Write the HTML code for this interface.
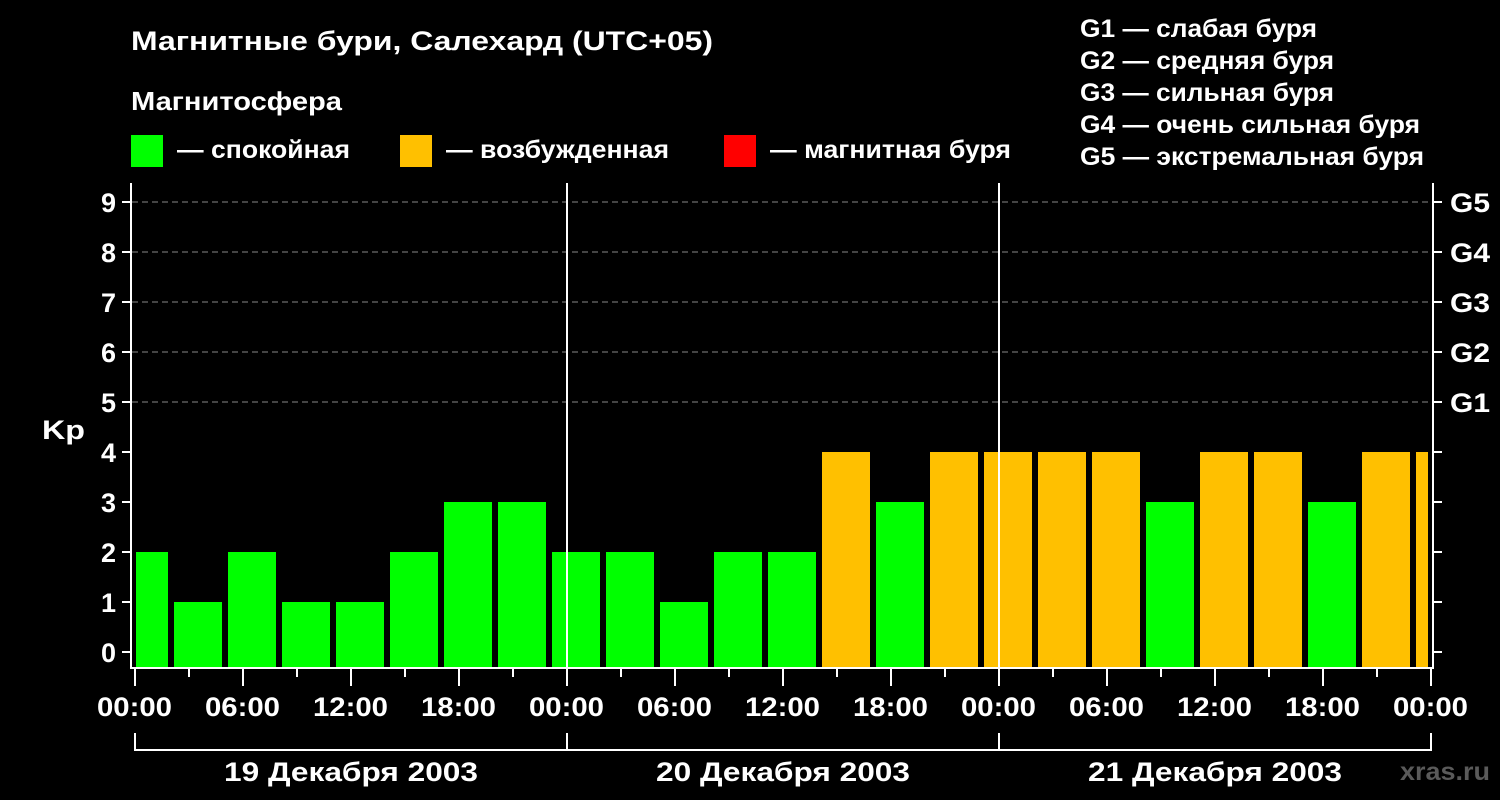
<!DOCTYPE html>
<html><head><meta charset="utf-8"><style>
html,body{margin:0;padding:0;background:#000;}
svg{display:block;font-family:"Liberation Sans",Arial,sans-serif;font-weight:bold;}
</style></head><body>
<svg width="1500" height="800" viewBox="0 0 1500 800" xmlns="http://www.w3.org/2000/svg">
<rect width="1500" height="800" fill="#000"/>
<text x="131" y="50" font-size="27" fill="#fff" textLength="582" lengthAdjust="spacingAndGlyphs">Магнитные бури, Салехард (UTC+05)</text>
<text x="131" y="110" font-size="26" fill="#fff" textLength="211" lengthAdjust="spacingAndGlyphs">Магнитосфера</text>
<rect x="131" y="135" width="32" height="32" fill="#00ff00"/>
<text x="177" y="158" font-size="25" fill="#fff" textLength="173" lengthAdjust="spacingAndGlyphs">— спокойная</text>
<rect x="400" y="135" width="32" height="32" fill="#ffc000"/>
<text x="446" y="158" font-size="25" fill="#fff" textLength="223" lengthAdjust="spacingAndGlyphs">— возбужденная</text>
<rect x="724" y="135" width="32" height="32" fill="#ff0000"/>
<text x="770" y="158" font-size="25" fill="#fff" textLength="241" lengthAdjust="spacingAndGlyphs">— магнитная буря</text>
<g font-size="25" fill="#fff" lengthAdjust="spacingAndGlyphs">
<text x="1080" y="37" textLength="237" lengthAdjust="spacingAndGlyphs">G1 — слабая буря</text>
<text x="1080" y="69" textLength="254" lengthAdjust="spacingAndGlyphs">G2 — средняя буря</text>
<text x="1080" y="101" textLength="254" lengthAdjust="spacingAndGlyphs">G3 — сильная буря</text>
<text x="1080" y="133" textLength="340" lengthAdjust="spacingAndGlyphs">G4 — очень сильная буря</text>
<text x="1080" y="165" textLength="344" lengthAdjust="spacingAndGlyphs">G5 — экстремальная буря</text>
</g>
<g stroke="#888" stroke-width="1" stroke-dasharray="6,4">
<line x1="132" x2="1432" y1="202" y2="202"/>
<line x1="132" x2="1432" y1="252" y2="252"/>
<line x1="132" x2="1432" y1="302" y2="302"/>
<line x1="132" x2="1432" y1="352" y2="352"/>
<line x1="132" x2="1432" y1="402" y2="402"/>
</g>
<g>
<rect x="136" y="552" width="32" height="115" fill="#00ff00"/>
<rect x="174" y="602" width="48" height="65" fill="#00ff00"/>
<rect x="228" y="552" width="48" height="115" fill="#00ff00"/>
<rect x="282" y="602" width="48" height="65" fill="#00ff00"/>
<rect x="336" y="602" width="48" height="65" fill="#00ff00"/>
<rect x="390" y="552" width="48" height="115" fill="#00ff00"/>
<rect x="444" y="502" width="48" height="165" fill="#00ff00"/>
<rect x="498" y="502" width="48" height="165" fill="#00ff00"/>
<rect x="552" y="552" width="48" height="115" fill="#00ff00"/>
<rect x="606" y="552" width="48" height="115" fill="#00ff00"/>
<rect x="660" y="602" width="48" height="65" fill="#00ff00"/>
<rect x="714" y="552" width="48" height="115" fill="#00ff00"/>
<rect x="768" y="552" width="48" height="115" fill="#00ff00"/>
<rect x="822" y="452" width="48" height="215" fill="#ffc000"/>
<rect x="876" y="502" width="48" height="165" fill="#00ff00"/>
<rect x="930" y="452" width="48" height="215" fill="#ffc000"/>
<rect x="984" y="452" width="48" height="215" fill="#ffc000"/>
<rect x="1038" y="452" width="48" height="215" fill="#ffc000"/>
<rect x="1092" y="452" width="48" height="215" fill="#ffc000"/>
<rect x="1146" y="502" width="48" height="165" fill="#00ff00"/>
<rect x="1200" y="452" width="48" height="215" fill="#ffc000"/>
<rect x="1254" y="452" width="48" height="215" fill="#ffc000"/>
<rect x="1308" y="502" width="48" height="165" fill="#00ff00"/>
<rect x="1362" y="452" width="48" height="215" fill="#ffc000"/>
<rect x="1416" y="452" width="12" height="215" fill="#ffc000"/>
</g>
<g stroke="#fff" stroke-width="2" fill="none">
<path d="M131 183 V668 H1433 V183"/>
<line x1="567" x2="567" y1="183" y2="668"/>
<line x1="999" x2="999" y1="183" y2="668"/>
<path d="M122 202H131M122 252H131M122 302H131M122 352H131M122 402H131M122 452H131M122 502H131M122 552H131M122 602H131M122 652H131"/>
<path d="M1433 202H1442M1433 252H1442M1433 302H1442M1433 352H1442M1433 402H1442M1433 452H1442M1433 502H1442M1433 552H1442M1433 602H1442M1433 652H1442"/>
<path d="M135 668V686M243 668V686M351 668V686M459 668V686M567 668V686M675 668V686M783 668V686M891 668V686M999 668V686M1107 668V686M1215 668V686M1323 668V686M1431 668V686"/>
<path d="M189 668V677M297 668V677M405 668V677M513 668V677M621 668V677M729 668V677M837 668V677M945 668V677M1053 668V677M1161 668V677M1269 668V677M1377 668V677"/>
<path d="M135 733V750H1431V733M567 733V750M999 733V750"/>
</g>
<g font-size="27" fill="#fff" text-anchor="end">
<text x="116" y="212">9</text><text x="116" y="262">8</text><text x="116" y="312">7</text>
<text x="116" y="362">6</text><text x="116" y="412">5</text><text x="116" y="462">4</text>
<text x="116" y="512">3</text><text x="116" y="562">2</text><text x="116" y="612">1</text>
<text x="116" y="662">0</text>
</g>
<text x="42" y="439" font-size="27" fill="#fff" textLength="43" lengthAdjust="spacingAndGlyphs">Kp</text>
<g font-size="27" fill="#fff">
<text x="1450" y="212" textLength="40" lengthAdjust="spacingAndGlyphs">G5</text>
<text x="1450" y="262" textLength="40" lengthAdjust="spacingAndGlyphs">G4</text>
<text x="1450" y="312" textLength="40" lengthAdjust="spacingAndGlyphs">G3</text>
<text x="1450" y="362" textLength="40" lengthAdjust="spacingAndGlyphs">G2</text>
<text x="1450" y="412" textLength="40" lengthAdjust="spacingAndGlyphs">G1</text>
</g>
<g font-size="27" fill="#fff">
<text x="97" y="716" textLength="75" lengthAdjust="spacingAndGlyphs">00:00</text>
<text x="205" y="716" textLength="75" lengthAdjust="spacingAndGlyphs">06:00</text>
<text x="313" y="716" textLength="75" lengthAdjust="spacingAndGlyphs">12:00</text>
<text x="421" y="716" textLength="75" lengthAdjust="spacingAndGlyphs">18:00</text>
<text x="529" y="716" textLength="75" lengthAdjust="spacingAndGlyphs">00:00</text>
<text x="637" y="716" textLength="75" lengthAdjust="spacingAndGlyphs">06:00</text>
<text x="745" y="716" textLength="75" lengthAdjust="spacingAndGlyphs">12:00</text>
<text x="853" y="716" textLength="75" lengthAdjust="spacingAndGlyphs">18:00</text>
<text x="961" y="716" textLength="75" lengthAdjust="spacingAndGlyphs">00:00</text>
<text x="1069" y="716" textLength="75" lengthAdjust="spacingAndGlyphs">06:00</text>
<text x="1177" y="716" textLength="75" lengthAdjust="spacingAndGlyphs">12:00</text>
<text x="1285" y="716" textLength="75" lengthAdjust="spacingAndGlyphs">18:00</text>
<text x="1393" y="716" textLength="75" lengthAdjust="spacingAndGlyphs">00:00</text>
<text x="224" y="781" textLength="254" lengthAdjust="spacingAndGlyphs">19 Декабря 2003</text>
<text x="656" y="781" textLength="254" lengthAdjust="spacingAndGlyphs">20 Декабря 2003</text>
<text x="1088" y="781" textLength="254" lengthAdjust="spacingAndGlyphs">21 Декабря 2003</text>
</g>
<text x="1400" y="780" font-size="25" fill="#5a5a5a" textLength="90" lengthAdjust="spacingAndGlyphs">xras.ru</text>
</svg>
</body></html>
